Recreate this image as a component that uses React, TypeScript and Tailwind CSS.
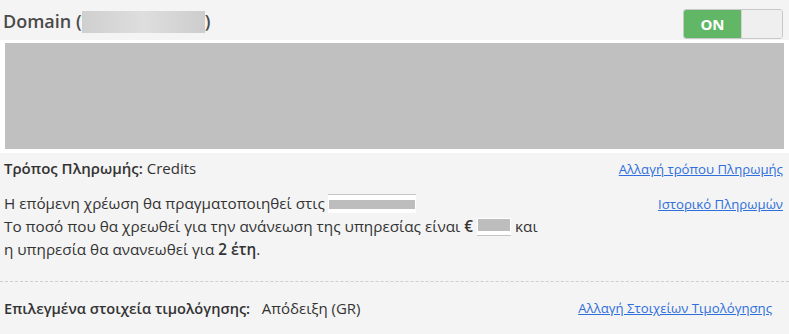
export default function App() {
  return (
    <div className="w-[789px] h-[334px] bg-[#f4f4f4] text-[#333] overflow-hidden" style={{ fontFamily: '"Open Sans", sans-serif' }}>
      <div className="flex items-center justify-between h-[40px] pl-[3px] pr-[6px]">
        <h2 className="flex items-center text-[18px] font-semibold text-[#4a4a4a] mt-[3px]">
          Domain (
          <span className="inline-block w-[123px] h-[22px] bg-gradient-to-r from-[#cfcfcf] via-[#dedede] to-[#cdcdcd]" />
          )
        </h2>
        <div className="flex h-[30px] w-[100px] rounded-[3px] border border-[#c8c8c8] overflow-hidden mt-[8px]">
          <div className="w-[57px] bg-[#62b766] text-white font-bold text-[15px] flex items-center justify-center">ON</div>
          <div className="flex-1 bg-[#efefef] border-l border-[#d4d4d4]" />
        </div>
      </div>
      <div className="bg-white px-[5px] pt-[3px] pb-[4px]">
        <div className="h-[106px] bg-[#c0c0c0]" />
      </div>
      <div className="flex justify-between items-start pl-[4px] pr-[6px] pt-[4px] text-[15px]">
        <div className="leading-[23px]">
          <div><span className="font-semibold">Τρόπος Πληρωμής:</span> Credits</div>
          <div className="mt-[12px] flex items-center text-[15.25px]">
            Η επόμενη χρέωση θα πραγματοποιηθεί στις
            <span className="inline-flex items-center ml-[3px] w-[88px] h-[19px] bg-white border-t border-[#c4c4c4] px-[1px]">
              <span className="block w-full h-[9px] bg-[#bdbdbd]" />
            </span>
          </div>
          <div className="flex items-center text-[15.3px]">
            Το ποσό που θα χρεωθεί για την ανάνεωση της υπηρεσίας είναι&nbsp;<span className="font-semibold">€</span>
            <span className="inline-flex flex-col ml-[4px] w-[34px] h-[18px] bg-white border-b border-[#c4c4c4] pt-[1px] px-[1px]">
              <span className="block w-full h-[12px] bg-[#bdbdbd]" />
            </span>
            <span className="ml-[4px]">και</span>
          </div>
          <div className="text-[15.25px]">η υπηρεσία θα ανανεωθεί για <span className="font-semibold">2 έτη</span>.</div>
        </div>
        <div className="flex flex-col items-end text-[13.2px] leading-[23px] text-[#2f6fdc] pt-[1px]">
          <a className="underline">Αλλαγή τρόπου Πληρωμής</a>
          <a className="underline mt-[12px]">Ιστορικό Πληρωμών</a>
        </div>
      </div>
      <div className="mt-[20px] border-t border-dashed border-[#cfcfcf]" />
      <div className="flex justify-between items-center pl-[4px] pr-[17px] mt-[15px] text-[15px] leading-[23px]">
        <div><span className="font-semibold text-[14.6px]">Επιλεγμένα στοιχεία τιμολόγησης:</span>&nbsp;&nbsp; Απόδειξη (GR)</div>
        <a className="underline text-[13.2px] text-[#2f6fdc]">Αλλαγή Στοιχείων Τιμολόγησης</a>
      </div>
    </div>
  );
}
